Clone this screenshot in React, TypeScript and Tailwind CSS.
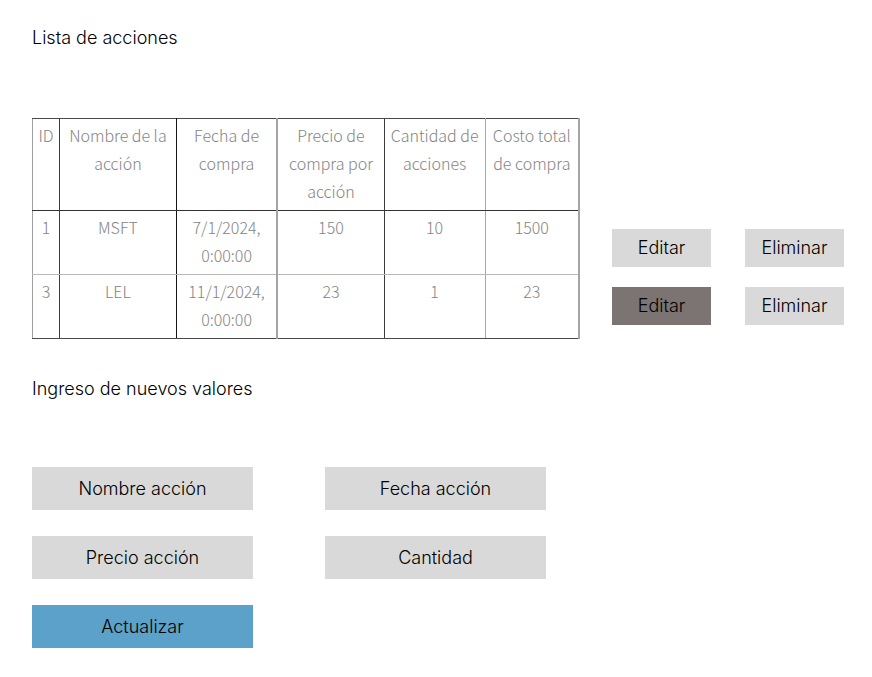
const headers = [
  'ID',
  'Nombre de la acción',
  'Fecha de compra',
  'Precio de compra por acción',
  'Cantidad de acciones',
  'Costo total de compra',
];

const rows = [
  ['1', 'MSFT', '7/1/2024, 0:00:00', '150', '10', '1500'],
  ['3', 'LEL', '11/1/2024, 0:00:00', '23', '1', '23'],
];

const rowLines = ['border-b-[#b8b8b8]', 'border-b-[#4a4a4a]'];

const columnLines = [
  'border-r border-r-[#3c3c3c]',
  'border-r border-r-[#141414]',
  'border-r-2 border-r-[#a4a4a4]',
  'border-r border-r-[#3c3c3c]',
  'border-r border-r-[#a8a8a8]',
  'border-r-2 border-r-[#a4a4a4]',
];

const fields = [
  { id: 'nombre', label: 'Nombre acción' },
  { id: 'fecha', label: 'Fecha acción' },
  { id: 'precio', label: 'Precio acción' },
  { id: 'cantidad', label: 'Cantidad' },
];

function RowActions({ id, active }: { id: string; active: boolean }) {
  return (
    <div className="flex h-[38px] gap-[34px]">
      <button
        type="button"
        aria-label={`Editar ${id}`}
        className={`w-[99px] ${active ? 'bg-[#7c7373]' : 'bg-[#d9d9d9]'}`}
      >
        Editar
      </button>
      <button type="button" aria-label={`Eliminar ${id}`} className="w-[99px] bg-[#d9d9d9]">
        Eliminar
      </button>
    </div>
  );
}

export default function App() {
  return (
    <main className="min-h-screen bg-white pt-6 pr-7 pb-7 pl-8 font-['Inter',sans-serif] text-lg leading-7 font-light text-black">
      <h1 className="font-light">Lista de acciones</h1>

      <section className="mt-[66px] flex items-end gap-8">
        <table className="min-w-0 flex-1 table-fixed border-collapse border border-t-[#4a4a4a] border-l-[#a0a0a0] text-center font-['Noto_Sans_CJK_SC',sans-serif] text-base leading-7 font-light text-[#848484]">
          <colgroup>
            <col className="w-[27px]" />
            <col className="w-[117px]" />
            <col className="w-[101px]" />
            <col className="w-[107px]" />
            <col className="w-[101px]" />
            <col className="w-[94px]" />
          </colgroup>
          <thead>
            <tr>
              {headers.map((header, i) => (
                <th
                  key={header}
                  scope="col"
                  className={`border-b border-b-[#333333] px-1 pt-[2px] pb-[5px] align-top font-light ${columnLines[i]}`}
                >
                  {header}
                </th>
              ))}
            </tr>
          </thead>
          <tbody>
            {rows.map((row, r) => (
              <tr key={row[0]}>
                {row.map((cell, i) => (
                  <td
                    key={headers[i]}
                    className={`border-b px-1 pt-[2px] pb-[5px] align-top ${rowLines[r]} ${columnLines[i]}`}
                  >
                    {cell}
                  </td>
                ))}
              </tr>
            ))}
          </tbody>
        </table>

        <div className="flex flex-col gap-5 pb-[14px]">
          {rows.map((row, r) => (
            <RowActions key={row[0]} id={row[1]} active={r === 1} />
          ))}
        </div>
      </section>

      <h2 className="mt-9 font-light">Ingreso de nuevos valores</h2>

      <form className="mt-16 grid grid-cols-[221px_221px] gap-x-[72px] gap-y-[26px]">
        {fields.map((field) => (
          <input
            key={field.id}
            id={field.id}
            name={field.id}
            type="text"
            aria-label={field.label}
            placeholder={field.label}
            className="h-[43px] min-w-0 bg-[#d9d9d9] px-2 text-center placeholder:text-black"
          />
        ))}
        <button type="button" className="h-[43px] bg-[#5ca1ca]">
          Actualizar
        </button>
      </form>
    </main>
  );
}
